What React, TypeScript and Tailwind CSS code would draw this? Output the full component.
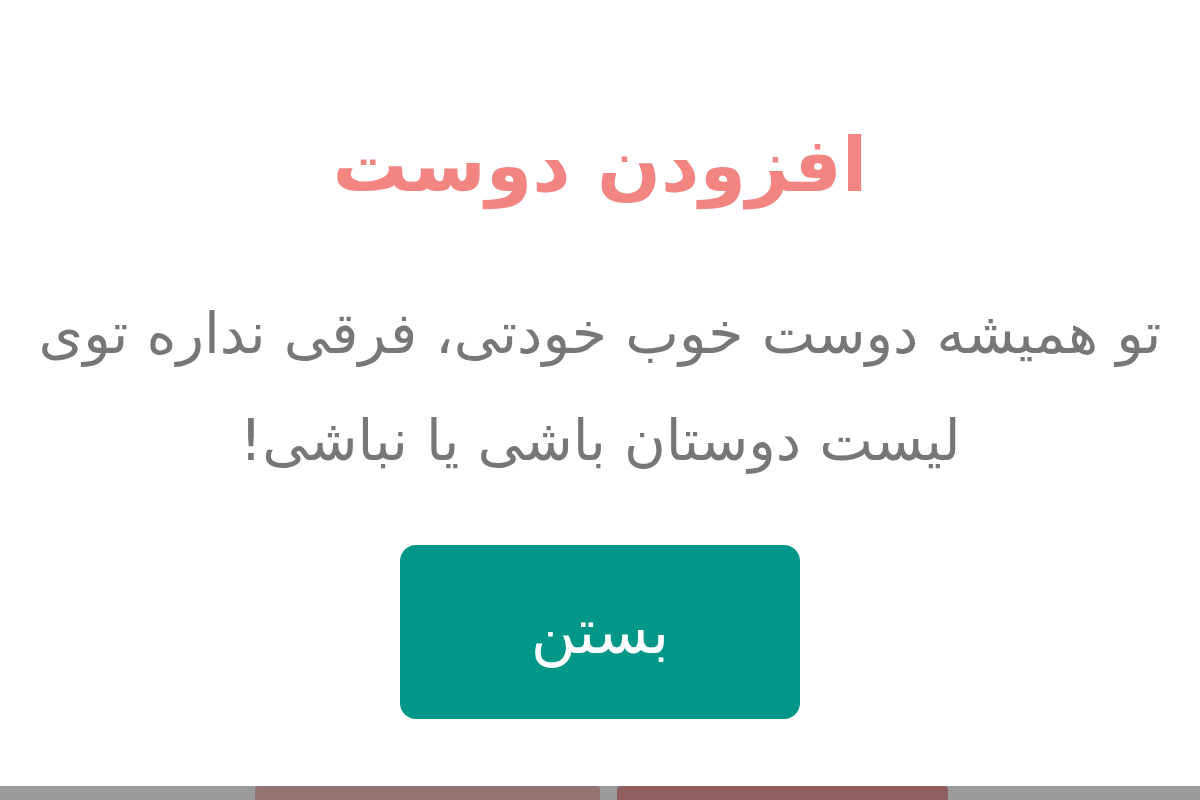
export default function App() {
  return (
    <div className="w-[1200px] h-[800px] bg-white flex flex-col overflow-hidden" dir="rtl" style={{ fontFamily: '"DejaVu Sans", "Noto Sans", sans-serif' }}>
      <div className="flex-1 flex flex-col items-center">
        <h1 className="mt-[120px] text-[75px] leading-[90px] font-bold text-[#f28482] whitespace-nowrap">افزودن دوست</h1>
        <p className="mt-[70px] text-[57px] leading-[107px] text-[#777777] text-center whitespace-nowrap">
          تو همیشه دوست خوب خودتی، فرقی نداره توی
          <br />
          لیست دوستان باشی یا نباشی!
        </p>
        <button className="mt-[51px] w-[400px] h-[174px] rounded-[16px] bg-[#009688] text-white text-[62px] leading-none flex items-center justify-center">
          بستن
        </button>
      </div>
      <div className="h-[14px] bg-[#9b9b9b] flex" dir="ltr">
        <div className="ml-[255px] w-[345px] h-full bg-[#977474] rounded-t-[4px]" />
        <div className="ml-[17px] w-[331px] h-full bg-[#8f5f5f] rounded-t-[4px]" />
      </div>
    </div>
  );
}
